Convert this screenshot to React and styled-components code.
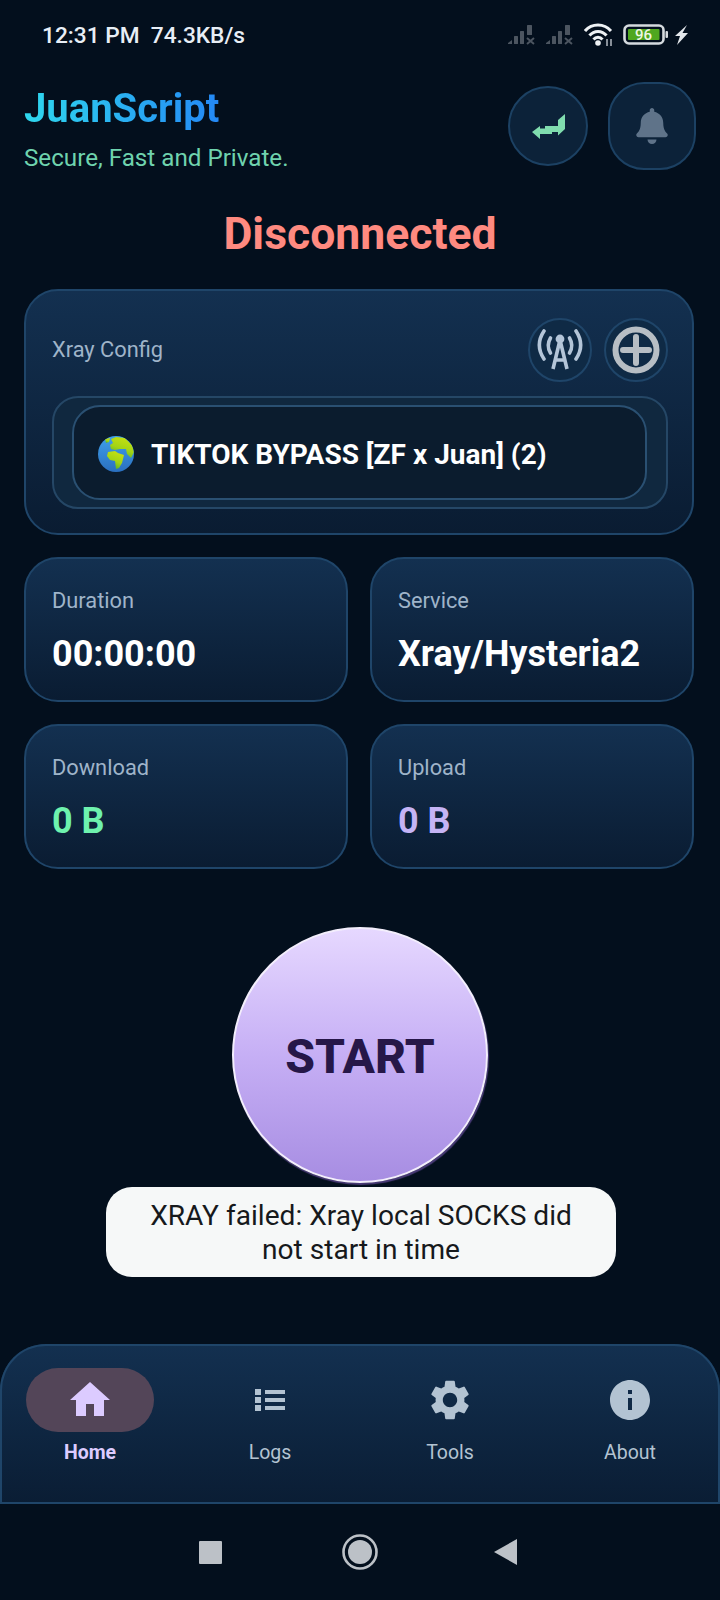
import React from "react";
import styled, { createGlobalStyle } from "styled-components";
import { FaBell } from "react-icons/fa";
import { MdHome, MdSettings, MdInfo } from "react-icons/md";

const GlobalStyle = createGlobalStyle`
  html, body {
    margin: 0;
    padding: 0;
    background: #030f1d;
  }
  * {
    box-sizing: border-box;
  }
`;

const Page = styled.div`
  width: 720px;
  height: 1600px;
  position: relative;
  display: flex;
  flex-direction: column;
  background: #030f1d;
  font-family: Roboto, "Liberation Sans", sans-serif;
  overflow: hidden;
`;

const StatusBar = styled.div`
  height: 70px;
  padding: 0 32px 0 42px;
  display: flex;
  align-items: center;
  justify-content: space-between;
  color: #e8eef6;
  font-size: 22.7px;
  font-weight: 500;
  white-space: pre;
`;

const StatusIcons = styled.div`
  display: flex;
  align-items: center;
  gap: 9px;
`;

const ChargeGroup = styled.div`
  display: flex;
  align-items: center;
  gap: 6px;
`;

const Header = styled.header`
  height: 100px;
  padding: 12px 24px 0 24px;
  display: flex;
  align-items: flex-start;
  justify-content: space-between;
`;

const Brand = styled.div`
  padding-top: 5px;
  display: flex;
  flex-direction: column;
  gap: 13px;
`;

const Title = styled.div`
  font-size: 40px;
  line-height: 44px;
  font-weight: 700;
  width: fit-content;
  background: linear-gradient(90deg, #2fd8ee, #2488f5);
  -webkit-background-clip: text;
  background-clip: text;
  color: transparent;
`;

const Tagline = styled.div`
  font-size: 24.2px;
  line-height: 28px;
  color: #6fd3ae;
`;

const HeaderActions = styled.div`
  display: flex;
  align-items: center;
  gap: 20px;
`;

const RoundButton = styled.div`
  width: ${(p) => p.$size}px;
  height: ${(p) => p.$size}px;
  border-radius: ${(p) => p.$radius};
  display: flex;
  align-items: center;
  justify-content: center;
  background: #0c2239;
  border: 2px solid #1c4163;
  color: #5f7389;
`;

const Status = styled.h1`
  margin: 0;
  height: 119px;
  padding-top: 39px;
  text-align: center;
  font-size: 44.5px;
  line-height: 50px;
  font-weight: 700;
  color: #ff8a80;
`;

const Main = styled.main`
  padding: 0 26px 0 24px;
  display: flex;
  flex-direction: column;
  gap: 22px;
`;

const Card = styled.section`
  background: linear-gradient(180deg, #133050 0%, #0a1c32 100%);
  border: 2px solid #1f4569;
  border-radius: ${(p) => p.$radius || 34}px;
`;

const ConfigCard = styled(Card)`
  height: 246px;
  padding: 26px 24px 24px 26px;
  display: flex;
  flex-direction: column;
  gap: 14px;
`;

const ConfigTop = styled.div`
  height: 65px;
  display: flex;
  align-items: center;
  justify-content: space-between;
`;

const Label = styled.div`
  font-size: 21.8px;
  line-height: 26px;
  color: #9fb4c9;
`;

const ConfigActions = styled.div`
  display: flex;
  gap: 12px;
`;

const SmallRound = styled.div`
  width: 64px;
  height: 64px;
  border-radius: 50%;
  display: flex;
  align-items: center;
  justify-content: center;
  background: #0f2a45;
  border: 2px solid #1f4569;
`;

const SelectOuter = styled.div`
  height: 113px;
  padding: 7px 19px 7px 18px;
  border: 2px solid #254766;
  border-radius: 26px;
  background: #10283f;
`;

const SelectInner = styled.div`
  height: 95px;
  padding: 3px 24px 0;
  display: flex;
  align-items: center;
  gap: 17px;
  border: 2px solid #2a5072;
  border-radius: 28px;
  background: #0b1c2e;
  color: #fff;
  font-size: 28px;
  font-weight: 700;
`;

const StatGrid = styled.div`
  display: grid;
  grid-template-columns: 324px 324px;
  grid-auto-rows: 145px;
  column-gap: 22px;
  row-gap: 22px;
`;

const StatCard = styled(Card)`
  padding: 29px 26px 0 26px;
  display: flex;
  flex-direction: column;
  gap: 18px;
`;

const StatValue = styled.div`
  font-size: 36px;
  line-height: 44px;
  font-weight: 700;
  color: ${(p) => p.$color || "#fff"};
`;

const StartArea = styled.div`
  flex: 1;
  padding-top: 58px;
  display: flex;
  justify-content: center;
`;

const StartButton = styled.button`
  width: 256px;
  height: 256px;
  padding: 3px 0 0;
  border: 2px solid #f3eefc;
  border-radius: 50%;
  background: linear-gradient(180deg, #e6d8ff 0%, #c6aff5 50%, #a78de2 100%);
  box-shadow: 1px 2px 1px #4a3b78;
  font-family: inherit;
  font-size: 48px;
  font-weight: 800;
  color: #261748;
`;

const Toast = styled.div`
  position: absolute;
  left: 106px;
  top: 1187px;
  width: 510px;
  height: 90px;
  padding: 12px 30px 0;
  border-radius: 26px;
  background: #f6f8f8;
  color: #16191c;
  text-align: center;
  font-size: 28.1px;
  line-height: 34px;
`;

const BottomNav = styled.nav`
  height: 160px;
  padding: 24px 0 0 0;
  display: grid;
  grid-template-columns: repeat(4, 1fr);
  background: linear-gradient(180deg, #133050 0%, #0a1d34 100%);
  box-shadow: inset 0 0 0 2px #1f4569;
  border-radius: 46px 46px 0 0;
`;

const NavItem = styled.div`
  display: flex;
  flex-direction: column;
  align-items: center;
  gap: 9px;
  font-size: 19.5px;
  line-height: 24px;
  font-weight: ${(p) => (p.$active ? 700 : 400)};
  color: ${(p) => (p.$active ? "#dccbff" : "#b3c3d2")};
`;

const NavIcon = styled.div`
  width: 128px;
  height: 64px;
  border-radius: 32px;
  display: flex;
  align-items: center;
  justify-content: center;
  background: ${(p) => (p.$active ? "#534558" : "transparent")};
`;

const SystemNav = styled.div`
  height: 96px;
  padding-right: 7px;
  display: flex;
  align-items: center;
  justify-content: center;
`;

const SysSlot = styled.div`
  width: ${(p) => p.$width}px;
  display: flex;
  justify-content: center;
`;

const SysSquare = styled.div`
  width: 23px;
  height: 23px;
  border-radius: 1px;
  background: #bcc1c7;
`;

const SignalIcon = () => (
  <svg width="29" height="22" viewBox="0 0 29 22">
    <g fill="#4c5560">
      <path d="M0 19 L4 16 V20 H0 Z" />
      <rect x="6" y="12" width="4" height="8" rx="0.5" />
      <rect x="12" y="7" width="4" height="13" rx="0.5" />
      <rect x="19" y="1" width="5" height="10" rx="0.5" />
    </g>
    <path d="M19 14 L26 20 M26 14 L19 20" stroke="#4c5560" strokeWidth="2" fill="none" />
  </svg>
);

const WifiIcon = () => (
  <svg width="30" height="24" viewBox="0 0 30 24">
    <g fill="none" stroke="#eef1f4" strokeWidth="3">
      <path d="M1 8 C8 0 20 0 27 8" />
      <path d="M5.5 12.5 C10 7 18 7 22.5 12.5" />
      <path d="M9.5 16.5 C12 13.5 16 13.5 18.5 16.5" />
    </g>
    <circle cx="14" cy="20" r="2.8" fill="#eef1f4" />
    <path d="M23 16 V23 M27 16 V23" stroke="#a9b0b8" strokeWidth="1.6" />
  </svg>
);

const BatteryIcon = () => (
  <svg width="46" height="22" viewBox="0 0 46 22">
    <rect x="1.5" y="1.5" width="39" height="18" rx="4.5" fill="none" stroke="#d5dade" strokeWidth="2.6" />
    <rect x="5" y="5" width="31.5" height="11" rx="1" fill="#4fa71f" />
    <rect x="42.5" y="7" width="2.5" height="7" rx="1" fill="#d5dade" />
    <text x="20.5" y="16" textAnchor="middle" fontSize="15" fontWeight="500" fontFamily="Roboto, sans-serif" fill="#eef7e4">96</text>
  </svg>
);

const BoltIcon = () => (
  <svg width="13" height="20" viewBox="0 0 13 20">
    <path d="M12 0 L0 11 H5 L2 20 L13 8 H7.5 Z" fill="#e4e8ec" />
  </svg>
);

const SwapIcon = () => (
  <svg width="33" height="25" viewBox="0 0 33 25">
    <path
      d="M0 18 L8 12 V14.5 H13 V12 H26 V6 L33 0 V15 L26 21.5 V18 H20 V20 H8 V25 Z"
      fill="#80dcae"
    />
  </svg>
);

const TowerIcon = () => (
  <svg width="46" height="44" viewBox="0 0 46 44">
    <g fill="none" stroke="#b4c5d8" strokeWidth="3.6" strokeLinecap="round">
      <path d="M7 3 C1 12 1 22 7 31" />
      <path d="M13.5 10 C10.5 15 10.5 20 13.5 25" />
      <path d="M39 3 C45 12 45 22 39 31" />
      <path d="M32.5 10 C35.5 15 35.5 20 32.5 25" />
      <path d="M23 12 L16 41 M23 12 L30 41 M18 32 H28" strokeWidth="3.6" strokeLinecap="butt" />
    </g>
    <circle cx="23" cy="11" r="4.4" fill="#b4c5d8" />
  </svg>
);

const PlusCircleIcon = () => (
  <svg width="48" height="48" viewBox="0 0 48 48">
    <circle cx="24" cy="24" r="20.5" fill="none" stroke="#b7bec4" strokeWidth="6" />
    <path d="M24 11 V37 M11 24 H37" stroke="#b7bec4" strokeWidth="6" strokeLinecap="round" />
  </svg>
);

const ListIcon = () => (
  <svg width="30" height="22" viewBox="0 0 30 22" fill="currentColor">
    <rect x="0" y="0" width="6" height="6" />
    <rect x="0" y="8" width="6" height="6" />
    <rect x="0" y="16" width="6" height="6" />
    <rect x="10" y="1" width="20" height="4" />
    <rect x="10" y="9" width="20" height="4" />
    <rect x="10" y="17" width="20" height="4" />
  </svg>
);

const GlobeIcon = () => (
  <svg width="36" height="36" viewBox="0 0 36 36">
    <defs>
      <clipPath id="globe-clip">
        <circle cx="18" cy="18" r="18" />
      </clipPath>
      <linearGradient id="globe-sea" x1="0" y1="0" x2="0" y2="1">
        <stop offset="0" stopColor="#3fa0ea" />
        <stop offset="1" stopColor="#2a6fc0" />
      </linearGradient>
      <linearGradient id="globe-land" x1="0.7" y1="0" x2="0.3" y2="1">
        <stop offset="0" stopColor="#c8e010" />
        <stop offset="0.55" stopColor="#a2d414" />
        <stop offset="1" stopColor="#4fae2a" />
      </linearGradient>
    </defs>
    <circle cx="18" cy="18" r="18" fill="url(#globe-sea)" />
    <g clipPath="url(#globe-clip)" fill="url(#globe-land)">
      <path d="M13 3 L18 1 L27 2 L34 9 L36 16 L33 22 L29 18 L28 13 L22 13 L17 14 L13 13 L12 9 L15 7 Z" />
      <path d="M10 16 L17 15 L20 17 L26 19 L24 27 L21 32 L18 33 L17 25 L12 24 L9 20 Z" />
      <path d="M7 3 L12 2 L11 6 L8 7 Z" />
    </g>
  </svg>
);

const SysCircle = () => (
  <svg width="36" height="36" viewBox="0 0 36 36">
    <circle cx="18" cy="18" r="16.5" fill="none" stroke="#bcc1c7" strokeWidth="2.6" />
    <circle cx="18" cy="18" r="12" fill="#bcc1c7" />
  </svg>
);

const SysBack = () => (
  <svg width="24" height="28" viewBox="0 0 24 28">
    <path d="M0 14 L23 1 V27 Z" fill="#bcc1c7" />
  </svg>
);

const stats = [
  { label: "Duration", value: "00:00:00" },
  { label: "Service", value: "Xray/Hysteria2" },
  { label: "Download", value: "0 B", color: "#6ef2ae" },
  { label: "Upload", value: "0 B", color: "#c5b4f5" },
];

const navItems = [
  { label: "Home", icon: <MdHome size={48} />, active: true },
  { label: "Logs", icon: <ListIcon /> },
  { label: "Tools", icon: <MdSettings size={48} /> },
  { label: "About", icon: <MdInfo size={48} /> },
];

export default function App() {
  return (
    <Page>
      <GlobalStyle />
      <StatusBar>
        <span>12:31 PM  74.3KB/s</span>
        <StatusIcons>
          <SignalIcon />
          <SignalIcon />
          <WifiIcon />
          <ChargeGroup>
            <BatteryIcon />
            <BoltIcon />
          </ChargeGroup>
        </StatusIcons>
      </StatusBar>

      <Header>
        <Brand>
          <Title>JuanScript</Title>
          <Tagline>Secure, Fast and Private.</Tagline>
        </Brand>
        <HeaderActions>
          <RoundButton $size={80} $radius="50%">
            <SwapIcon />
          </RoundButton>
          <RoundButton $size={88} $radius="36px">
            <FaBell size={36} />
          </RoundButton>
        </HeaderActions>
      </Header>

      <Status>Disconnected</Status>

      <Main>
        <ConfigCard>
          <ConfigTop>
            <Label>Xray Config</Label>
            <ConfigActions>
              <SmallRound>
                <TowerIcon />
              </SmallRound>
              <SmallRound>
                <PlusCircleIcon />
              </SmallRound>
            </ConfigActions>
          </ConfigTop>
          <SelectOuter>
            <SelectInner>
              <GlobeIcon />
              <span>TIKTOK BYPASS [ZF x Juan] (2)</span>
            </SelectInner>
          </SelectOuter>
        </ConfigCard>

        <StatGrid>
          {stats.map((s) => (
            <StatCard key={s.label}>
              <Label>{s.label}</Label>
              <StatValue $color={s.color}>{s.value}</StatValue>
            </StatCard>
          ))}
        </StatGrid>
      </Main>

      <StartArea>
        <StartButton>START</StartButton>
      </StartArea>

      <Toast>XRAY failed: Xray local SOCKS did not start in time</Toast>

      <BottomNav>
        {navItems.map(({ label, icon, active }) => (
          <NavItem key={label} $active={active}>
            <NavIcon $active={active}>{icon}</NavIcon>
            {label}
          </NavItem>
        ))}
      </BottomNav>

      <SystemNav>
        <SysSlot $width={150}>
          <SysSquare />
        </SysSlot>
        <SysSlot $width={148}>
          <SysCircle />
        </SysSlot>
        <SysSlot $width={144}>
          <SysBack />
        </SysSlot>
      </SystemNav>
    </Page>
  );
}
